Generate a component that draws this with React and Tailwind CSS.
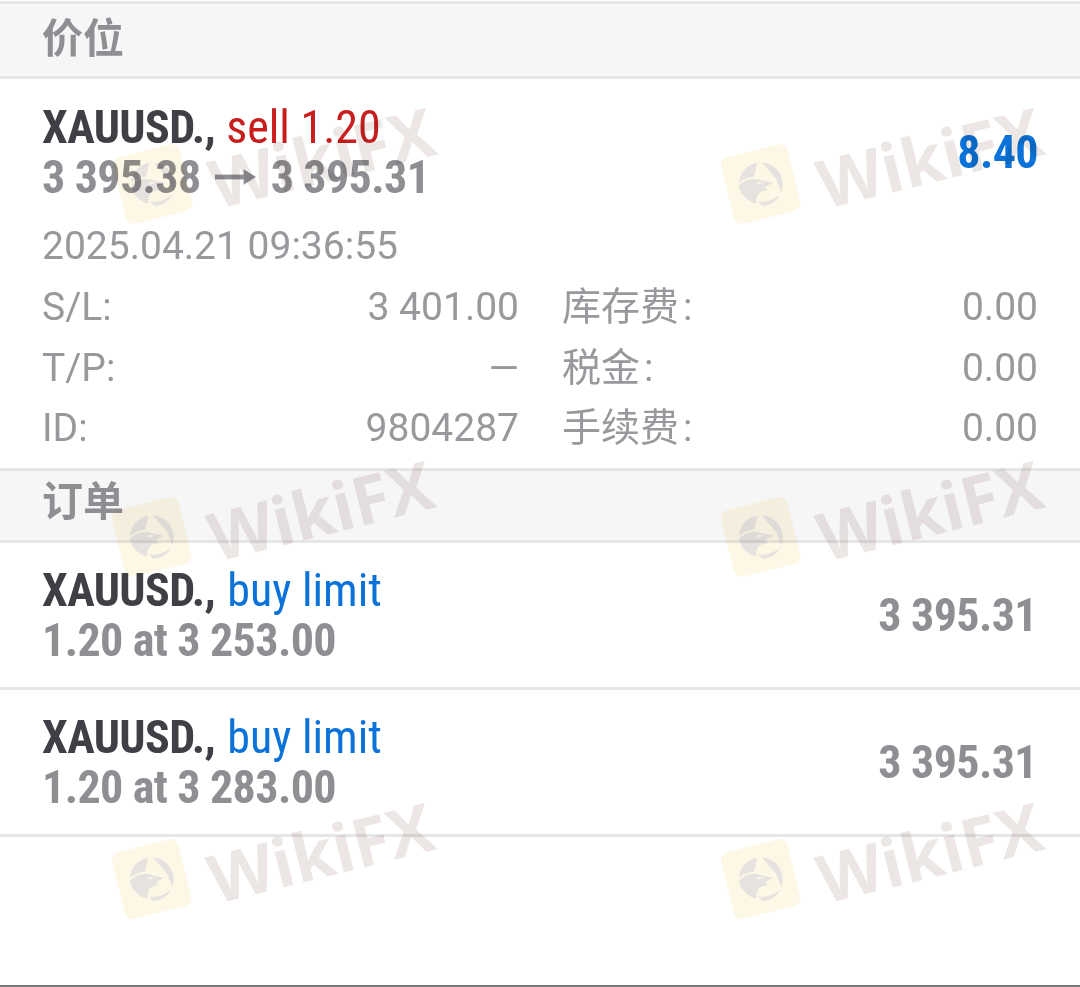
const cond = "[font-family:Roboto,'Noto_Sans_CJK_SC',sans-serif] [font-stretch:75%] tracking-[-0.6px]";
const red = "font-normal tracking-normal ml-[1px] text-[#c81e1e]";
const blue = "font-normal tracking-normal ml-[2px] text-[#0a72d8]";

function Logo() {
  return (
    <svg viewBox="0 0 80 80" className="w-[72px] h-[72px]">
      <rect x="2" y="2" width="76" height="76" rx="9" fill="#fdf7e6" />
      <g fill="#e6e2df">
        <path d="M17 33 A24 24 0 0 1 42 16 L35 30 C28 29 22 30 17 33Z" />
        <path d="M47 17 A24 24 0 0 1 60 54 L58 38 Z" />
        <path d="M58 57 A24 24 0 0 1 36 64 L32 58 C42 62 50 60 58 57Z" />
        <path d="M16 36 C24 31 34 31 42 36 L54 42 L44 44 L46 49 C38 46 32 50 30 60 C22 56 15 46 16 36Z" />
      </g>
      <path d="M36 37 L44 39 L37 40Z" fill="#fdf7e6" />
    </svg>
  );
}

function Watermark({ className }) {
  return (
    <div className={"absolute pointer-events-none flex items-center gap-[20px] -rotate-[14deg] mix-blend-multiply " + className}>
      <Logo />
      <span className="font-['Open_Sans',sans-serif] font-bold text-[67px] leading-none text-[#ece7e5] translate-y-[14px]">WikiFX</span>
    </div>
  );
}

function Header({ children, h }) {
  return (
    <div className={"flex items-center bg-[#f6f6f7] border-t-[3px] border-b-[3px] border-[#e6e6e7] px-[42px] " + h}>
      <span className="font-['Noto_Sans_CJK_SC',sans-serif] font-bold text-[41px] leading-none text-[#8e8e93]">{children}</span>
    </div>
  );
}

function Cell({ label, value }) {
  return (
    <div className="flex justify-between items-center h-[60.5px] font-['Roboto','Noto_Sans_CJK_SC',sans-serif] font-[380] text-[39px] text-[#98989d]">
      <span>{label}</span>
      <span>{value}</span>
    </div>
  );
}

function Order({ price, volume }) {
  return (
    <div className="flex items-center justify-between h-[147px] pl-[42px] pr-[43px] border-b-[3px] border-[#e6e6e7]">
      <div className={cond + " font-bold text-[46px] leading-[50px]"}>
        <div className="text-[#3f3f46]">
          XAUUSD., <span className={blue}>buy limit</span>
        </div>
        <div className="text-[#8e8e93]">1.20 at {volume}</div>
      </div>
      <div className={cond + " font-bold text-[46px] text-[#8e8e93]"}>{price}</div>
    </div>
  );
}

export default function App() {
  return (
    <div className="relative w-[1080px] h-[987px] overflow-hidden bg-white border-b-2 border-[#777] pt-[1px]">
      <Header h="h-[78px] pb-[10px]">价位</Header>

      <div className="h-[389px] pl-[42px] pr-[42px] pt-[23px]">
        <div className="flex items-center justify-between">
          <div className={cond + " font-bold text-[46px] leading-[50px]"}>
            <div className="text-[#3f3f46]">
              XAUUSD., <span className={red}>sell 1.20</span>
            </div>
            <div className="text-[#8e8e93] flex items-center gap-[14px]">
              3 395.38
              <svg viewBox="0 0 44 20" className="w-[42px] h-[20px]">
                <path d="M0 10 H32" stroke="#8e8e93" strokeWidth="5" />
                <path d="M30 2 L43 10 L30 18 Z" fill="#8e8e93" />
              </svg>
              3 395.31
            </div>
          </div>
          <div className={cond + " font-bold text-[46px] text-[#0a72d8]"}>8.40</div>
        </div>
        <div className="font-['Roboto',sans-serif] font-[380] text-[39px] leading-none mt-[25px] text-[#98989d]">2025.04.21 09:36:55</div>
        <div className="grid grid-cols-[477px_476px] gap-x-[43px] mt-[11px]">
          <div>
            <Cell label="S/L:" value="3 401.00" />
            <Cell label="T/P:" value="—" />
            <Cell label="ID:" value="9804287" />
          </div>
          <div>
            <Cell label={"库存费\u200A:"} value="0.00" />
            <Cell label={"税金\u200A:"} value="0.00" />
            <Cell label={"手续费\u200A:"} value="0.00" />
          </div>
        </div>
      </div>

      <Header h="h-[75px] pb-[15px]">订单</Header>
      <Order volume="3 253.00" price="3 395.31" />
      <Order volume="3 283.00" price="3 395.31" />

      <Watermark className="left-[113px] top-[118px]" />
      <Watermark className="left-[721px] top-[118px]" />
      <Watermark className="left-[112px] top-[471px]" />
      <Watermark className="left-[721px] top-[471px]" />
      <Watermark className="left-[112px] top-[813px]" />
      <Watermark className="left-[721px] top-[813px]" />
    </div>
  );
}
